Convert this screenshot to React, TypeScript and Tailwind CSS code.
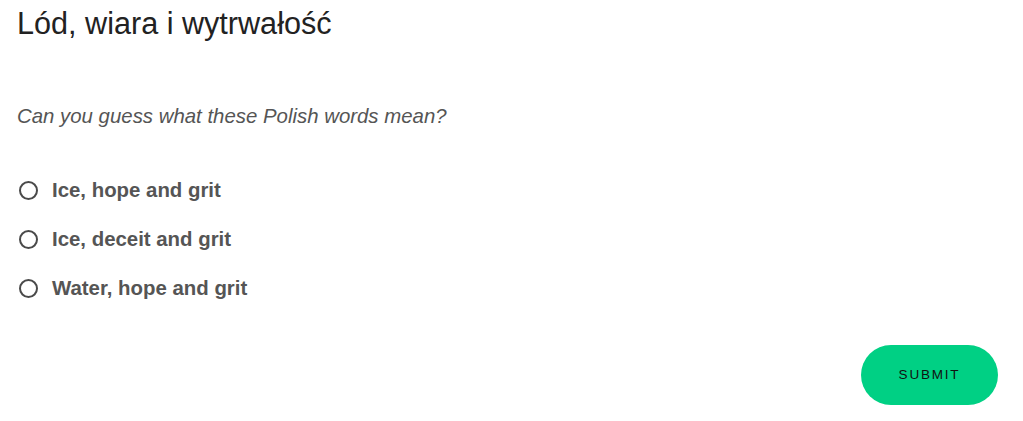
import React from "react";

const options = ["Ice, hope and grit", "Ice, deceit and grit", "Water, hope and grit"];

export default function App() {
  return (
    <div
      className="w-[1023px] h-[421px] bg-white flex flex-col pl-[17px] pt-[5px]"
      style={{ fontFamily: '"Liberation Sans", Arial, Helvetica, sans-serif' }}
    >
      <h1 className="text-[30.6px] leading-[36px] text-[#222222] font-normal">Lód, wiara i wytrwałość</h1>
      <p className="mt-[63px] text-[20.4px] leading-[24px] italic text-[#555555]">
        Can you guess what these Polish words mean?
      </p>
      <div className="mt-[50px] flex flex-col gap-[25px]">
        {options.map((o) => (
          <label key={o} className="flex items-center h-[24px]">
            <span className="ml-[2px] w-[19px] h-[19px] rounded-full border-2 border-[#4a4a4a] bg-white" />
            <span className="ml-[14px] text-[20.4px] leading-[24px] font-bold text-[#555555]">{o}</span>
          </label>
        ))}
      </div>
      <div className="mt-[45px] flex justify-end pr-[25px]">
        <button className="w-[137px] h-[60px] rounded-full bg-[#00d084] text-[13.5px] tracking-[1.8px] text-[#111111] uppercase">
          Submit
        </button>
      </div>
    </div>
  );
}
